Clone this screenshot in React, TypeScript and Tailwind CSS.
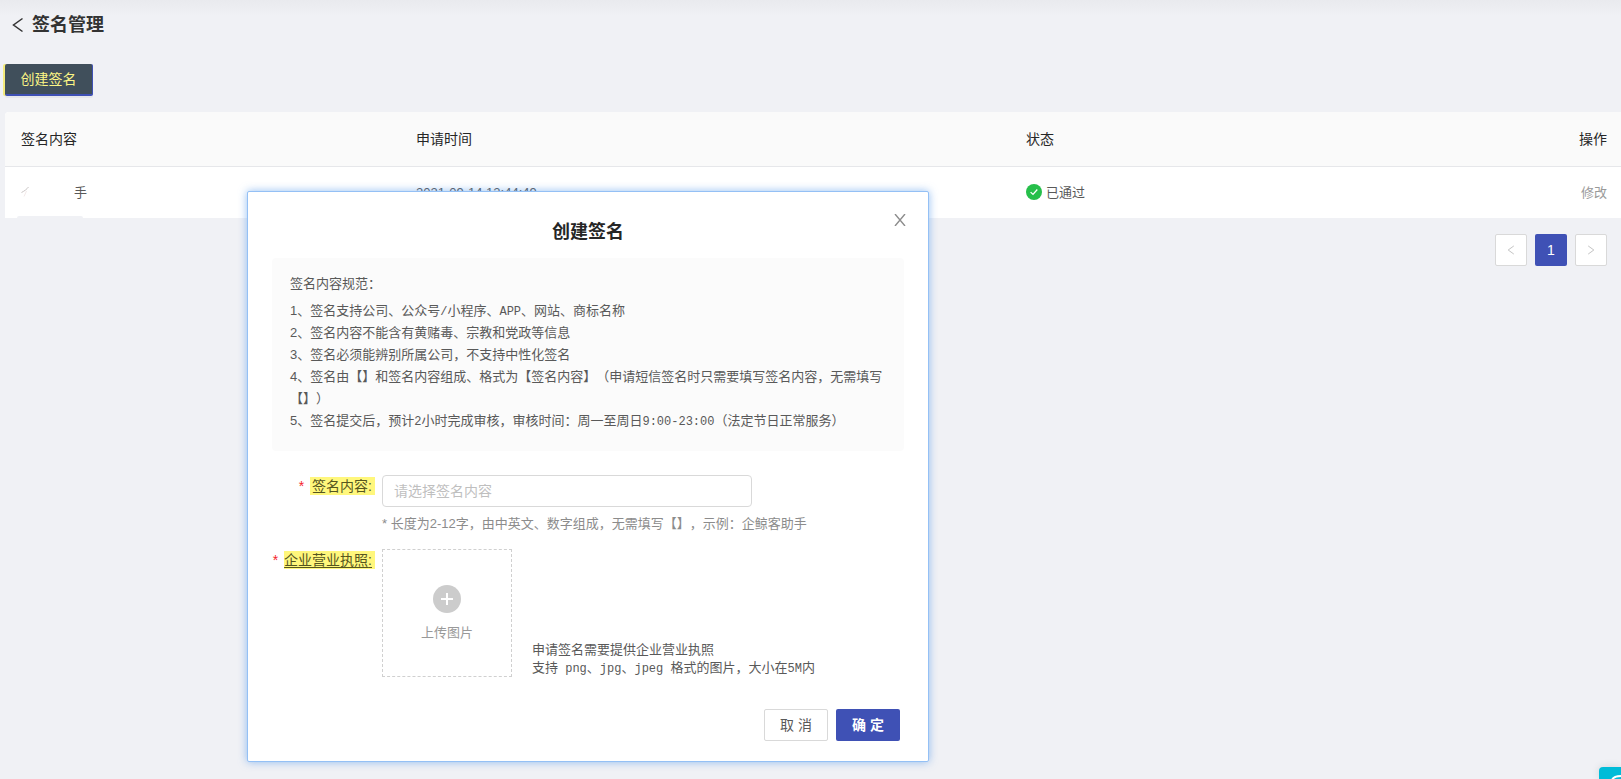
import { useState } from "react";
import type { ReactNode } from "react";

const COLUMNS = ["签名内容", "申请时间", "状态", "操作"];

function Mono({ children }: { children: ReactNode }) {
	return (
		<span className="font-['Liberation_Mono','Noto_Sans_CJK_SC',monospace] text-xs leading-none">
			{children}
		</span>
	);
}

function Chevron({ className, flip }: { className: string; flip?: boolean }) {
	return (
		<svg
			viewBox="0 0 12 16"
			className={className}
			fill="none"
			stroke="currentColor"
			strokeWidth="1.5"
			aria-hidden="true"
		>
			<path d={flip ? "M1.5 1.5 10.5 8l-9 6.5" : "M10.5 1.5 1.5 8l9 6.5"} />
		</svg>
	);
}

function CheckCircle() {
	return (
		<svg viewBox="0 0 16 16" className="size-4 shrink-0" aria-hidden="true">
			<circle cx="8" cy="8" r="8" fill="#26bf4a" />
			<path
				d="M4.6 8.1 7 10.4l4.3-4.9"
				fill="none"
				stroke="#fff"
				strokeWidth="1.3"
			/>
		</svg>
	);
}

function SignatureTable() {
	return (
		<div className="relative">
			<table className="w-full table-fixed border-collapse overflow-hidden rounded-tl bg-white text-left">
				<colgroup>
					<col className="w-[395px]" />
					<col className="w-[610px]" />
					<col />
					<col className="w-[120px]" />
				</colgroup>
				<thead>
					<tr className="h-[54px] border-b border-[#e6e7ea] bg-[#fafafa] text-sm text-[#262626]">
						{COLUMNS.map((title, i) => (
							<th
								key={title}
								className={
									i === 3
										? "pr-[14px] text-right font-normal"
										: "px-4 font-normal"
								}
							>
								{title}
							</th>
						))}
					</tr>
				</thead>
				<tbody>
					<tr className="h-[52px] text-[13px] text-[#595959]">
						<td className="px-4">
							<span className="flex items-center gap-[45px]">
								<svg
									viewBox="0 0 8 12"
									className="h-3 w-2"
									fill="none"
									stroke="#c9c4c4"
									aria-hidden="true"
								>
									<path d="M7.5 1C6 3 3.500 5 .5 6.500" />
									<path d="M3 10.500 5.500 5" stroke="#f3eaea" />
								</svg>
								<span>手</span>
							</span>
						</td>
						<td className="px-4">2021-09-14 12:44:49</td>
						<td className="px-4">
							<span className="flex items-center gap-1">
								<CheckCircle />
								已通过
							</span>
						</td>
						<td className="pr-[14px] text-right">
							<button type="button" className="text-[#999]">
								修改
							</button>
						</td>
					</tr>
				</tbody>
			</table>
			<div className="absolute bottom-0 left-3 h-[2px] w-[66px] rounded-t bg-[#f0f1f5]" />
		</div>
	);
}

function Pagination() {
	const arrow =
		"flex size-8 items-center justify-center rounded-xs border border-[#d9d9d9] bg-white text-[#bfbfbf]";
	return (
		<nav className="mt-4 flex justify-end gap-2 pr-[14px]" aria-label="分页">
			<button type="button" className={arrow} aria-label="上一页">
				<Chevron className="h-[10px] w-2" />
			</button>
			<button
				type="button"
				className="size-8 rounded-xs bg-[#3f51b5] text-sm font-medium text-white"
			>
				1
			</button>
			<button type="button" className={arrow} aria-label="下一页">
				<Chevron className="h-[10px] w-2" flip />
			</button>
		</nav>
	);
}

function Rules() {
	return (
		<section className="rounded bg-[#fbfbfb] px-[18px] pt-[15px] pb-[19px] text-[13px] leading-[22px] text-[#595959] [text-spacing-trim:space-all]">
			<h3 className="mb-[5px]">签名内容规范：</h3>
			<p>
				1、签名支持公司、公众号<Mono>/</Mono>小程序、
				<Mono>APP</Mono>、网站、商标名称
			</p>
			<p>2、签名内容不能含有黄赌毒、宗教和党政等信息</p>
			<p>3、签名必须能辨别所属公司，不支持中性化签名</p>
			<p>
				4、签名由【】和签名内容组成、格式为【签名内容】（申请短信签名时只需要填写签名内容，无需填写【】）
			</p>
			<p>
				5、签名提交后，预计<Mono>2</Mono>
				小时完成审核，审核时间：周一至周日<Mono>9:00-23:00</Mono>
				（法定节日正常服务）
			</p>
		</section>
	);
}

function FieldLabel({
	htmlFor,
	underline,
	children,
}: {
	htmlFor: string;
	underline?: boolean;
	children: ReactNode;
}) {
	return (
		<label
			htmlFor={htmlFor}
			className="flex h-[22px] w-[103px] shrink-0 items-center justify-end gap-[6px] text-sm leading-[18px] text-[#55551f]"
		>
			<span className="text-[#f5222d]">*</span>
			<span
				className={
					underline
						? "bg-[#fff77c] pr-[3px] underline underline-offset-2"
						: "bg-[#fff77c] pr-[3px] pl-[2px]"
				}
			>
				{children}:
			</span>
		</label>
	);
}

function CreateDialog({ onClose }: { onClose: () => void }) {
	const [content, setContent] = useState("");

	return (
		<div
			role="dialog"
			aria-labelledby="dialog-title"
			className="absolute top-[191px] left-[247px] w-[682px] rounded-xs border border-[#94c0f5] bg-white px-6 pb-5 shadow-[0_0_8px_rgba(90,155,235,0.65)]"
		>
			<button
				type="button"
				onClick={onClose}
				aria-label="关闭"
				className="absolute top-[22px] right-[22px] text-[#8c8c8c]"
			>
				<svg
					viewBox="0 0 12 12"
					className="size-3"
					fill="none"
					stroke="currentColor"
					strokeWidth="1.4"
				>
					<path d="M1 0l10 12M11 0L1 12" />
				</svg>
			</button>
			<h2
				id="dialog-title"
				className="pt-[26px] pb-3 text-center text-lg font-bold text-[#262626]"
			>
				创建签名
			</h2>
			<Rules />

			<div className="mt-6 flex gap-[7px]">
				<FieldLabel htmlFor="content">签名内容</FieldLabel>
				<div>
					<input
						id="content"
						value={content}
						onChange={(e) => setContent(e.target.value)}
						placeholder="请选择签名内容"
						className="block h-8 w-[370px] rounded border border-[#d9d9d9] px-[11px] text-sm text-[#595959] placeholder:text-[#bfbfbf]"
					/>
					<p className="mt-[7px] text-[13px] leading-5 text-[#8c8c8c] [text-spacing-trim:space-all]">
						* 长度为2-12字，由中英文、数字组成，无需填写【】，示例：企鲸客助手
					</p>
				</div>
			</div>

			<div className="mt-[15px] flex gap-[7px]">
				<FieldLabel htmlFor="license" underline>
					企业营业执照
				</FieldLabel>
				<div className="flex items-end gap-5">
					<button
						id="license"
						type="button"
						className="flex h-32 w-[130px] flex-col items-center justify-center gap-[10px] border border-dashed border-[#d0d0d0] pt-[2px] text-[13px] leading-5 text-[#999]"
					>
						<svg viewBox="0 0 28 28" className="size-7" aria-hidden="true">
							<circle cx="14" cy="14" r="14" fill="#ccc" />
							<path d="M14 8v12M8 14h12" stroke="#fff" strokeWidth="2" />
						</svg>
						上传图片
					</button>
					<p className="text-[13px] leading-[18px] text-[#595959]">
						申请签名需要提供企业营业执照
						<br />
						支持<Mono> png</Mono>、<Mono>jpg</Mono>、<Mono>jpeg </Mono>
						格式的图片，大小在<Mono>5M</Mono>内
					</p>
				</div>
			</div>

			<div className="mt-8 flex justify-end gap-2 pr-1">
				<button
					type="button"
					onClick={onClose}
					className="h-8 w-16 rounded-xs border border-[#d9d9d9] bg-white text-sm text-[#595959]"
				>
					取 消
				</button>
				<button
					type="button"
					className="h-8 w-16 rounded-xs bg-[#3f51b5] text-sm font-bold text-white"
				>
					确 定
				</button>
			</div>
		</div>
	);
}

export default function App() {
	const [open, setOpen] = useState(true);

	return (
		<main className="relative min-h-screen overflow-hidden bg-[#f0f1f5] bg-[linear-gradient(#e9eaee,#f0f1f5_16px)] pl-[5px] font-['Liberation_Sans','Noto_Sans_CJK_SC',sans-serif]">
			<header className="flex h-[50px] items-center gap-2 pl-[7px] text-[#333]">
				<button type="button" aria-label="返回">
					<Chevron className="h-4 w-3" />
				</button>
				<h1 className="text-lg font-bold">签名管理</h1>
			</header>

			<div className="mt-[14px] mb-4 flex">
				<button
					type="button"
					onClick={() => setOpen(true)}
					className="h-8 w-[88px] rounded-xs border-r border-b-2 border-[#3f51b5] bg-[#404f5b] text-sm text-[#fbf585] shadow-[-2px_0_0_#f3ea7c,0_2px_0_rgba(0,0,0,0.04)]"
				>
					创建签名
				</button>
			</div>

			<SignatureTable />
			<Pagination />

			{open && <CreateDialog onClose={() => setOpen(false)} />}

			<button
				type="button"
				aria-label="客服"
				className="absolute right-0 bottom-0 h-3 w-[22px] overflow-hidden rounded-tl bg-[#00bcd8] shadow-[0_0_8px_rgba(0,0,0,0.12)]"
			>
				<svg
					viewBox="0 0 22 12"
					className="h-3 w-[22px]"
					fill="none"
					stroke="#fff"
					strokeWidth="2"
				>
					<path d="M13 13c1-2.500 3.500-4 9-4" />
				</svg>
			</button>
		</main>
	);
}
